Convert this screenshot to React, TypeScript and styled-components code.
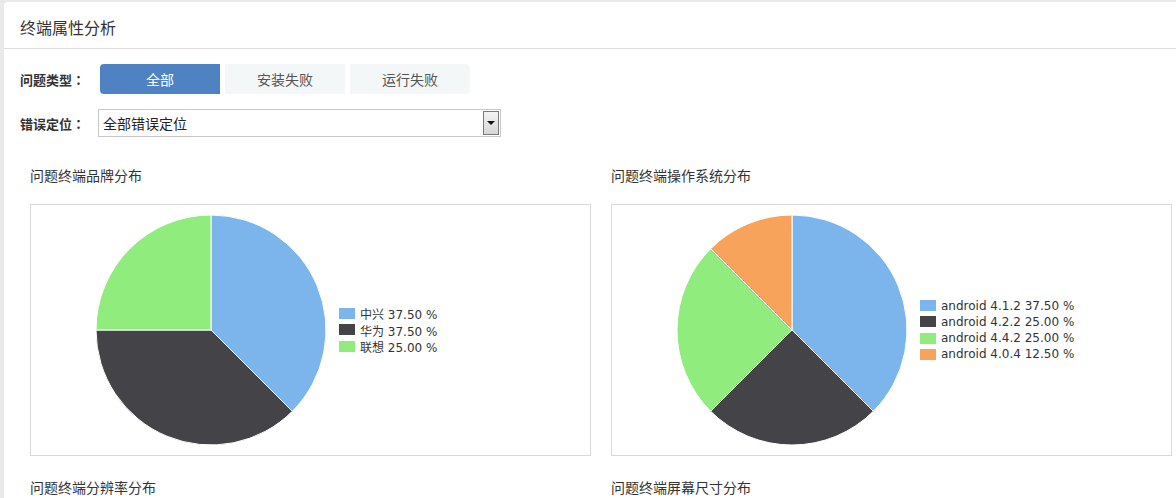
import React from "react";
import styled, { createGlobalStyle } from "styled-components";

const GlobalStyle = createGlobalStyle`
  html, body {
    margin: 0;
    padding: 0;
    background: #e9e9e9;
    overflow: hidden;
  }
  body {
    font-family: "Noto Sans CJK SC", "Noto Sans", sans-serif;
    color: #333;
    text-spacing-trim: space-all;
  }
  * { box-sizing: border-box; }
`;

const Page = styled.div`
  padding: 2px 0 0 4px;
  width: 1176px;
  height: 498px;
`;

const Panel = styled.div`
  background: #fff;
  border-radius: 4px 0 0 0;
  height: 520px;
`;

const Header = styled.div`
  height: 47px;
  display: flex;
  align-items: center;
  padding: 3px 0 0 16px;
  font-size: 16px;
  color: #333;
  border-bottom: 1px solid #dcdcdc;
`;

const Filters = styled.div`
  padding: 15px 0 0 16px;
  display: flex;
  flex-direction: column;
  gap: 15px;
`;

const FilterRow = styled.div`
  display: flex;
  align-items: center;
`;

const Label = styled.div<{ $w: number }>`
  width: ${(p) => p.$w}px;
  font-family: "Noto Sans CJK SC", "Noto Sans", sans-serif;
  font-size: 13px;
  font-weight: bold;
  color: #333;
  white-space: nowrap;
`;

const Colon = styled.span`
  font-family: "Noto Sans CJK TC", sans-serif;
`;

const Tabs = styled.div`
  display: flex;
  gap: 5px;
`;

const Tab = styled.div<{ $active?: boolean; $pos: "first" | "mid" | "last" }>`
  width: 120px;
  height: 30px;
  display: flex;
  align-items: center;
  justify-content: center;
  font-size: 14px;
  background: ${(p) => (p.$active ? "#4f82c3" : "#f4f7f7")};
  color: ${(p) => (p.$active ? "#fff" : "#555")};
  border-radius: ${(p) =>
    p.$pos === "first" ? "4px 0 0 4px" : p.$pos === "last" ? "0 4px 4px 0" : "0"};
`;

const Select = styled.div`
  width: 403px;
  height: 28px;
  border: 1px solid #c8c8c8;
  display: flex;
  align-items: center;
  justify-content: space-between;
  padding: 0 1px 0 4px;
  font-size: 14px;
  color: #222;
`;

const ArrowBtn = styled.div`
  width: 16px;
  height: 24px;
  border: 1px solid #7a7a7a;
  background: linear-gradient(#f4f4f4, #d6d6d6);
  display: flex;
  align-items: center;
  justify-content: center;
  &::after {
    content: "";
    border-left: 4px solid transparent;
    border-right: 4px solid transparent;
    border-top: 4px solid #111;
  }
`;

const Charts = styled.div`
  display: grid;
  grid-template-columns: 561px 561px;
  column-gap: 20px;
  padding: 28px 0 0 26px;
`;

const ChartBlock = styled.div<{ $top?: number }>`
  display: flex;
  flex-direction: column;
  margin-top: ${(p) => p.$top ?? 0}px;
`;

const ChartTitle = styled.div`
  font-size: 14px;
  line-height: 20px;
  height: 20px;
  color: #333;
`;

const ChartBox = styled.div`
  margin-top: 19px;
  height: 252px;
  border: 1px solid #d9d9d9;
  display: flex;
  align-items: center;
  padding-left: 64px;
`;

const Legend = styled.div`
  margin-left: 12px;
  display: flex;
  flex-direction: column;
`;

const LegendItem = styled.div`
  display: flex;
  align-items: center;
  height: 16.3px;
  font-family: "DejaVu Sans", "Noto Sans CJK SC", sans-serif;
  font-size: 12px;
  color: #333;
  white-space: nowrap;
`;

const Swatch = styled.span<{ $c: string }>`
  width: 16px;
  height: 11px;
  background: ${(p) => p.$c};
  margin-right: 5px;
  flex: none;
`;

type Slice = { name: string; value: number; color: string };

const C = { blue: "#7cb5ec", dark: "#434348", green: "#90ed7d", orange: "#f7a35c" };

function Pie({ data }: { data: Slice[] }) {
  const cx = 116, cy = 116, r = 115;
  let acc = 0;
  const total = data.reduce((s, d) => s + d.value, 0);
  return (
    <svg width={232} height={232} viewBox="0 0 232 232" style={{ flex: "none" }}>
      {data.map((d, i) => {
        const a0 = (acc / total) * Math.PI * 2;
        acc += d.value;
        const a1 = (acc / total) * Math.PI * 2;
        const x0 = cx + r * Math.sin(a0), y0 = cy - r * Math.cos(a0);
        const x1 = cx + r * Math.sin(a1), y1 = cy - r * Math.cos(a1);
        const large = a1 - a0 > Math.PI ? 1 : 0;
        return (
          <path
            key={i}
            d={`M${cx},${cy} L${x0},${y0} A${r},${r} 0 ${large} 1 ${x1},${y1} Z`}
            fill={d.color}
            stroke="#fff"
            strokeWidth={1}
            strokeLinejoin="round"
          />
        );
      })}
    </svg>
  );
}

function Chart({ data }: { data: Slice[] }) {
  return (
    <ChartBox>
      <Pie data={data} />
      <Legend>
        {data.map((d) => (
          <LegendItem key={d.name}>
            <Swatch $c={d.color} />
            {d.name} {d.value.toFixed(2)} %
          </LegendItem>
        ))}
      </Legend>
    </ChartBox>
  );
}

const brand: Slice[] = [
  { name: "中兴", value: 37.5, color: C.blue },
  { name: "华为", value: 37.5, color: C.dark },
  { name: "联想", value: 25, color: C.green },
];

const os: Slice[] = [
  { name: "android 4.1.2", value: 37.5, color: C.blue },
  { name: "android 4.2.2", value: 25, color: C.dark },
  { name: "android 4.4.2", value: 25, color: C.green },
  { name: "android 4.0.4", value: 12.5, color: C.orange },
];

export default function App() {
  return (
    <>
      <GlobalStyle />
      <Page>
        <Panel>
          <Header>终端属性分析</Header>
          <Filters>
            <FilterRow>
              <Label $w={80}>问题类型<Colon>：</Colon></Label>
              <Tabs>
                <Tab $active $pos="first">全部</Tab>
                <Tab $pos="mid">安装失败</Tab>
                <Tab $pos="last">运行失败</Tab>
              </Tabs>
            </FilterRow>
            <FilterRow>
              <Label $w={78}>错误定位<Colon>：</Colon></Label>
              <Select>
                <span>全部错误定位</span>
                <ArrowBtn />
              </Select>
            </FilterRow>
          </Filters>
          <Charts>
            <ChartBlock>
              <ChartTitle>问题终端品牌分布</ChartTitle>
              <Chart data={brand} />
            </ChartBlock>
            <ChartBlock>
              <ChartTitle>问题终端操作系统分布</ChartTitle>
              <Chart data={os} />
            </ChartBlock>
            <ChartBlock $top={21}>
              <ChartTitle>问题终端分辨率分布</ChartTitle>
            </ChartBlock>
            <ChartBlock $top={21}>
              <ChartTitle>问题终端屏幕尺寸分布</ChartTitle>
            </ChartBlock>
          </Charts>
        </Panel>
      </Page>
    </>
  );
}
